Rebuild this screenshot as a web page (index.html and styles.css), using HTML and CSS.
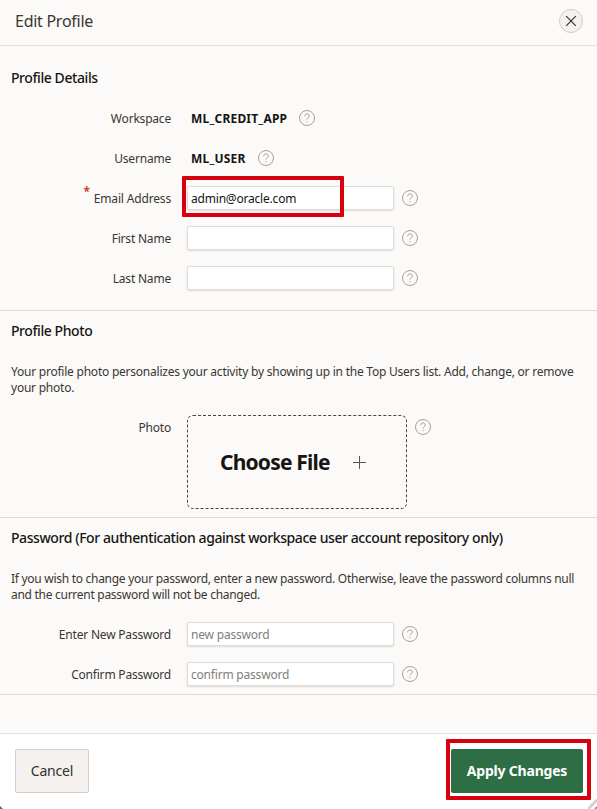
FILE: index.html
```
<!DOCTYPE html>
<html lang="en">
<head>
<meta charset="utf-8">
<title>Edit Profile</title>
<link rel="stylesheet" href="styles.css">
</head>
<body>
<svg class="defs" aria-hidden="true"><symbol id="help" viewBox="0 0 18 18"><circle cx="9" cy="9" r="7.5"/><path d="M6.7 7.3C6.7 5.7 7.7 4.9 9 4.9s2.3.8 2.3 2.1c0 1.7-2.3 1.7-2.3 3.6M9 12v1.2"/></symbol></svg>
<div class="dialog">
  <header class="header">
    <h1 class="title">Edit Profile</h1>
    <button class="close" aria-label="Close"><svg viewBox="0 0 12 12"><path d="M1.2 1.2l9.6 9.6M10.8 1.2L1.2 10.8"/></svg></button>
  </header>
  <main class="body">
    <section class="section details">
      <h2 class="heading">Profile Details</h2>
      <div class="row"><span class="label">Workspace</span><strong class="value">ML_CREDIT_APP</strong><svg class="help"><use href="#help"/></svg></div>
      <div class="row"><span class="label">Username</span><strong class="value">ML_USER</strong><svg class="help"><use href="#help"/></svg></div>
      <div class="row"><label class="label required" for="email">Email Address</label><input class="field" id="email" value="admin@oracle.com"><svg class="help"><use href="#help"/></svg><span class="highlight email-highlight"></span></div>
      <div class="row"><label class="label" for="first">First Name</label><input class="field" id="first"><svg class="help"><use href="#help"/></svg></div>
      <div class="row"><label class="label" for="last">Last Name</label><input class="field" id="last"><svg class="help"><use href="#help"/></svg></div>
    </section>
    <section class="section photo">
      <h2 class="heading">Profile Photo</h2>
      <p class="text">Your profile photo personalizes your activity by showing up in the Top Users list. Add, change, or remove<br>your photo.</p>
      <div class="row photo-row"><span class="label">Photo</span><div class="drop"><span class="choose">Choose File</span><svg class="plus" viewBox="0 0 13 13"><path d="M6.5 0v13M0 6.5h13"/></svg></div><svg class="help"><use href="#help"/></svg></div>
    </section>
    <section class="section password">
      <h2 class="heading">Password (For authentication against workspace user account repository only)</h2>
      <p class="text">If you wish to change your password, enter a new password. Otherwise, leave the password columns null<br>and the current password will not be changed.</p>
      <div class="row"><label class="label" for="new">Enter New Password</label><input class="field" id="new" placeholder="new password"><svg class="help"><use href="#help"/></svg></div>
      <div class="row"><label class="label" for="confirm">Confirm Password</label><input class="field" id="confirm" placeholder="confirm password"><svg class="help"><use href="#help"/></svg></div>
    </section>
  </main>
  <footer class="footer">
    <button class="btn cancel">Cancel</button>
    <div class="apply-wrap"><button class="btn apply">Apply Changes</button><span class="highlight apply-highlight"></span></div>
    <svg class="corner" viewBox="0 0 3 3"><path d="M0 0l3 3H0z"/></svg>
    <svg class="grip" viewBox="0 0 9 10"><path d="M0 10L9 1"/><path class="grip-end" d="M7 10l2-2"/></svg>
  </footer>
</div>
</body>
</html>
```
FILE: styles.css
```
* { box-sizing: border-box; }
body { margin: 0; background: #fbfaf8; color: #3a3632; font: 12px/16px "Noto Sans", "Open Sans", sans-serif; }
.defs { position: absolute; width: 0; height: 0; }
.dialog { width: 597px; height: 809px; display: flex; flex-direction: column; overflow: hidden; position: relative; }
.header { height: 46px; flex: none; border-bottom: 1px solid #e4e2e0; display: flex; align-items: center; justify-content: space-between; padding: 0 14px 3px 15px; }
.title { margin: 0; font-size: 16px; line-height: 24px; font-weight: 400; letter-spacing: -0.27px; color: #3a3632; }
.close { width: 24px; height: 24px; padding: 0; border: 1px solid #cfccc9; border-radius: 50%; background: #f5f1ef; display: flex; align-items: center; justify-content: center; }
.close svg { width: 12px; height: 12px; fill: none; stroke: #35312e; stroke-width: 1.2; }
.body { flex: 1; }
.section { border-bottom: 1px solid #dddad7; padding: 10px 0 0; }
.details { height: 265px; padding-top: 22px; }
.photo { height: 207px; }
.password { height: 177px; }
.heading { margin: 0 0 0 11px; font-size: 14px; line-height: 20px; font-weight: 500; letter-spacing: -0.42px; color: #161513; }
.details .heading { margin-bottom: 10px; }
.text { margin: 23px 0 0 11px; white-space: nowrap; letter-spacing: -0.23px; }
.password .text { margin-bottom: 11px; letter-spacing: -0.28px; }
.row { height: 40px; display: flex; align-items: center; position: relative; }
.label { width: 171px; margin-right: 16px; padding-top: 2px; text-align: right; position: relative; white-space: nowrap; letter-spacing: -0.2px; }
.required { letter-spacing: -0.16px; }
.required::before { content: "*"; color: #c74634; font-weight: 700; font-size: 12px; margin-right: 4px; position: relative; top: -7px; line-height: 1; }
.value { margin: 0 3px 0 4px; padding-top: 2px; font-weight: 700; letter-spacing: 0.19px; color: #161513; }
.value + .help { margin-left: 8px; }
.field { width: 207px; height: 24px; margin: 0 7px 0 0; padding: 1px 3px 0; border: 1px solid #dfdcd8; border-radius: 2px; background: #fff; box-shadow: 0 1px 2px rgba(0,0,0,.12); color: #161513; font: inherit; letter-spacing: -0.2px; }
.field::placeholder { color: #817e7b; opacity: 1; }
.help { width: 18px; height: 18px; flex: none; fill: none; stroke: #a5a19e; stroke-width: 1; }
.highlight { position: absolute; border: 4px solid #d7000f; border-radius: 1px; pointer-events: none; }
.email-highlight { left: 182px; top: -2px; width: 162px; height: 41px; }
.photo-row { height: 94px; margin-top: 19px; align-items: flex-start; }
.photo-row .label { padding-top: 5px; }
.photo-row .help { margin: 3px 0 0 7px; }
.drop { width: 220px; height: 94px; border: 1px dashed #4b4642; border-radius: 6px; display: flex; align-items: center; padding-left: 32px; }
.choose { width: 133px; font-size: 21px; line-height: 28px; font-weight: 700; letter-spacing: -0.8px; color: #161513; white-space: nowrap; }
.plus { width: 13px; height: 13px; stroke: #5b5652; stroke-width: 1; }
.footer { height: 76px; flex: none; border-top: 1px solid #e4e2e0; background: #fff; display: flex; align-items: flex-start; justify-content: space-between; padding: 15px 14px 0 15px; position: relative; }
.btn { height: 44px; padding: 0; border-radius: 2px; font: 14px/20px "Noto Sans", "Open Sans", sans-serif; letter-spacing: -0.2px; white-space: nowrap; }
.cancel { width: 74px; border: 1px solid #d3cfcb; background: #f5f1ef; color: #33302d; }
.apply { width: 132px; border: 0; background: #2d6e45; color: #fff; font-weight: 700; display: block; }
.apply-wrap { position: relative; }
.apply-highlight { left: -5px; top: -10px; width: 145px; height: 61px; }
.corner { position: absolute; left: 0; bottom: 0; width: 3px; height: 3px; fill: #666; }
.grip { position: absolute; right: 0; bottom: 0; width: 9px; height: 10px; stroke: #d2d2d2; stroke-width: 3; }
.grip-end { stroke: #777; stroke-width: 1.5; }
```
